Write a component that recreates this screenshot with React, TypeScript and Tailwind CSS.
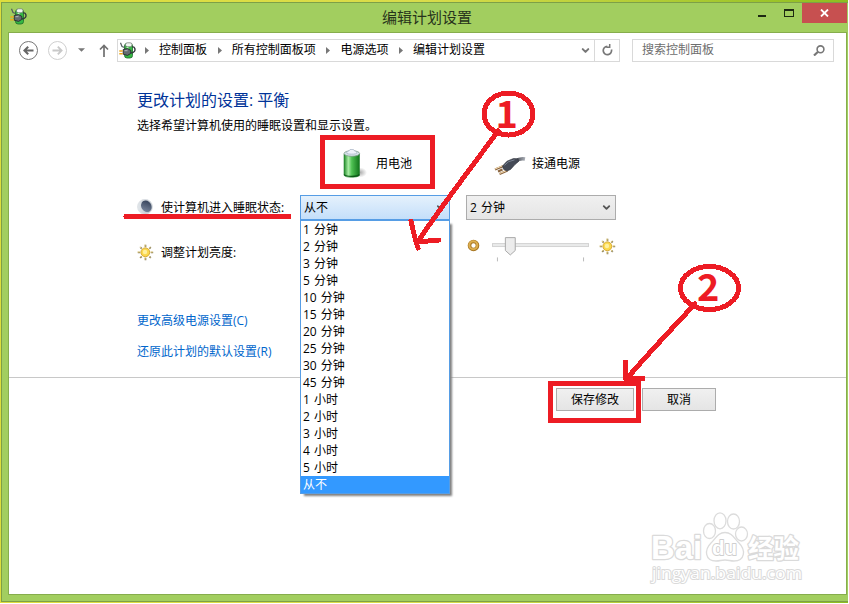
import { ChevronDown } from "lucide-react";

const crumbs = ["控制面板", "所有控制面板项", "电源选项", "编辑计划设置"];

const durations = [
  "1 分钟", "2 分钟", "3 分钟", "5 分钟", "10 分钟", "15 分钟", "20 分钟", "25 分钟",
  "30 分钟", "45 分钟", "1 小时", "2 小时", "3 小时", "4 小时", "5 小时", "从不",
];

function PowerIcon() {
  return (
    <svg width="17" height="17" viewBox="0 0 17 17" className="shrink-0">
      <rect x="5.5" y="1.500" width="8" height="14.500" rx="2.500" fill="#35b843" stroke="#1d6b29" strokeWidth="0.8" />
      <rect x="6.500" y="0.800" width="6.500" height="4" rx="1.800" fill="#f1f6f2" stroke="#68736b" strokeWidth="0.7" />
      <path d="M8.500 5v3" stroke="#b4f3b6" strokeWidth="2" />
      <path d="M1.500.8 3 4.500l2.500 1" fill="none" stroke="#555c60" strokeWidth="1.2" />
      <path d="M12 11c3.500-.3 4.400-2.500 3.800-4.500-.4-1.300-1.400-1.800-2.600-1.500" fill="none" stroke="#33383b" strokeWidth="1.4" />
      <path d="M4.200 7.500 8.500 6.500l3.400 2-.2 3-3.200 1.900-4.300-1.200z" fill="#646b6f" stroke="#25292b" strokeWidth="0.9" />
      <path d="M5.500 8.700h3" stroke="#b5bcc0" />
      <path d="M.3 9h3.400M.3 11.700h3.400" stroke="#eda91c" strokeWidth="1.4" />
    </svg>
  );
}

function BatteryIcon() {
  return (
    <svg width="26" height="32" viewBox="0 0 26 32" className="shrink-0">
      <defs>
        <linearGradient id="cell">
          <stop offset="0" stopColor="#1f8a28" />
          <stop offset="0.28" stopColor="#a9eda5" />
          <stop offset="0.5" stopColor="#4fc153" />
          <stop offset="1" stopColor="#11741b" />
        </linearGradient>
        <radialGradient id="cellShade">
          <stop offset="0" stopColor="#888" stopOpacity="0.7" />
          <stop offset="1" stopColor="#888" stopOpacity="0" />
        </radialGradient>
      </defs>
      <ellipse cx="18" cy="24.500" rx="7" ry="5" fill="url(#cellShade)" />
      <path d="M2 6v21c0 3 15.500 3 15.500 0V6z" fill="url(#cell)" stroke="#278532" strokeWidth="0.6" />
      <path d="M2.200 26.500c2 2.500 13 2.500 15.100 0" fill="none" stroke="#0d5a18" strokeWidth="1.2" />
      <ellipse cx="9.800" cy="5.500" rx="7.800" ry="2.800" fill="#d6e2e8" stroke="#7d9a8a" strokeWidth="0.8" />
      <path d="M4.500 5c0-2 3-1.500 3.500-3.500h3.500c.5 2 3.500 1.500 3.500 3.500 0 1.500-10.500 1.500-10.500 0z" fill="#eef2fa" stroke="#a6b3c4" strokeWidth="0.7" />
    </svg>
  );
}

function PlugIcon() {
  return (
    <svg width="32" height="20" viewBox="0 0 32 20" className="shrink-0">
      <defs>
        <linearGradient id="cord">
          <stop offset="0" stopColor="#40454e" />
          <stop offset="1" stopColor="#a9adb5" />
        </linearGradient>
      </defs>
      <path d="M31 3c-4-.8-6.500 0-9.500 2.300" fill="none" stroke="url(#cord)" strokeWidth="3.4" />
      <path d="m1 13.500 8.500-3.500M5.500 18l8-3.500M4 15.500l4.500-2" stroke="#8a6540" strokeWidth="2.2" />
      <path d="m1 13 8-3.400M5.500 17.500l8-3.300" stroke="#f8dfb4" strokeWidth="1" />
      <path d="m8.500 10 4.500-4.800 6.500-2.700 4.500.3.500 2.700-3.500 3-4.500 5-3.500 1.500-3.500-1.800z" fill="#454b57" stroke="#2b2f37" strokeWidth="0.6" />
      <path d="m10.500 9.300 4-3.600 6-1.800" fill="none" stroke="#7a8392" strokeWidth="1" />
    </svg>
  );
}

function MoonIcon() {
  return (
    <svg width="17" height="17" viewBox="0 0 17 17" className="shrink-0">
      <defs>
        <linearGradient id="moon" x1="0" x2="1">
          <stop offset="0" stopColor="#e3e8ec" />
          <stop offset="1" stopColor="#b5bcc4" />
        </linearGradient>
        <linearGradient id="night" x1="1" y1="0" x2="0" y2="1">
          <stop offset="0" stopColor="#2b3850" />
          <stop offset="1" stopColor="#8592a8" />
        </linearGradient>
      </defs>
      <circle cx="8" cy="7.800" r="7.500" fill="url(#moon)" stroke="#dadee2" strokeWidth="0.7" />
      <ellipse cx="9.300" cy="7.300" rx="5" ry="6" fill="url(#night)" transform="rotate(-30 9.300 7.300)" />
    </svg>
  );
}

function SunIcon() {
  return (
    <svg width="17" height="17" viewBox="0 0 17 17" className="shrink-0">
      <g fill="none" strokeWidth="1.7">
        <path
          d="M8.500.8v2.400M8.500 13.800v2.400M.8 8.500h2.400M13.800 8.500h2.400M3.200 3.200l1.500 1.500M12.300 12.300l1.500 1.500M3.200 13.800l1.500-1.500M12.300 4.700l1.500-1.500"
          stroke="#8f8561"
        />
        <path
          d="M8 .5v2.200M8 13.500v2.200M.5 8h2.200M13.500 8h2.200M2.900 2.900l1.300 1.300M12 12l1.300 1.300M2.900 13.300l1.300-1.300M12 4.200l1.300-1.300"
          stroke="#f0d67c"
          strokeWidth="0.9"
        />
      </g>
      <circle cx="8.300" cy="8.300" r="4.400" fill="#fbd94e" stroke="#d7a62c" strokeWidth="0.9" />
      <circle cx="8" cy="8" r="2.200" fill="#fff0a0" />
    </svg>
  );
}

function DimIcon() {
  return (
    <svg width="13" height="13" viewBox="0 0 13 13" className="shrink-0">
      <circle cx="6.500" cy="6.500" r="4" fill="#fff" stroke="#a87724" strokeWidth="3.600" />
      <circle cx="6.300" cy="6.300" r="4" fill="none" stroke="#dcae50" strokeWidth="2" />
    </svg>
  );
}

function TitleBar() {
  return (
    <header className="flex h-[29px] shrink-0 items-start">
      <div className="flex w-[100px] pt-[5px] pl-[8px]">
        <PowerIcon />
      </div>
      <h1 className="flex-1 pt-[4px] pl-[4px] text-center text-[15px] leading-5 text-[#27331b]">编辑计划设置</h1>
      <div className="flex w-[100px] items-start justify-end">
        <span className="mt-[12px] mr-[18px] h-[2px] w-2 bg-[#1d2912]" />
        <span className="mt-[6px] mr-[8px] h-[8px] w-[10px] border border-t-2 border-[#1d2912]" />
        <button className="mr-px flex h-5 w-[45px] items-center justify-center bg-[#c75050]">
          <svg width="9" height="8" viewBox="0 0 9 8">
            <path d="m1 .5 7 7M8 .5l-7 7" stroke="#fff" strokeWidth="1.8" />
          </svg>
        </button>
      </div>
    </header>
  );
}

function NavBar() {
  return (
    <nav className="flex h-[34px] shrink-0 items-center">
      <span className="ml-[10px] flex size-[19px] items-center justify-center rounded-full border-[1.5px] border-[#777] text-[#666]">
        <svg width="11" height="9" viewBox="0 0 11 9" fill="none" stroke="currentColor" strokeWidth="2">
          <path d="M10.500 4.500h-9M5.200.7 1.400 4.500l3.800 3.800" />
        </svg>
      </span>
      <span className="ml-[10px] flex size-[19px] items-center justify-center rounded-full border border-[#cfcfcf] text-[#c8c8c8]">
        <svg width="11" height="9" viewBox="0 0 11 9" fill="none" stroke="currentColor" strokeWidth="1.8">
          <path d="M.5 4.500h9M5.800.7l3.800 3.800-3.800 3.800" />
        </svg>
      </span>
      <svg width="7" height="4" viewBox="0 0 8 4" className="ml-[11px]">
        <path d="M0 0h8L4 4z" fill="#777" />
      </svg>
      <svg width="10" height="13" viewBox="0 0 10 13" className="ml-[14px]" fill="none" stroke="#707070" strokeWidth="1.7">
        <path d="M5 13V1.500M1 5.500l4-4 4 4" />
      </svg>
      <div className="ml-[8px] flex h-[23px] w-[503px] items-center border border-[#d9d9d9]">
        <div className="ml-[1px] flex w-[18px]">
          <PowerIcon />
        </div>
        {crumbs.map((crumb) => (
          <div key={crumb} className="flex items-center">
            <svg width="4" height="7" viewBox="0 0 4 7" className="mr-[10px] ml-[8px]">
              <path d="M0 0l4 3.500L0 7z" fill="#777" />
            </svg>
            <span className="mr-[2.700px]">{crumb}</span>
          </div>
        ))}
        <div className="ml-auto flex h-full items-center">
          <ChevronDown size={11} strokeWidth={4.500} className="mr-[3px] text-[#777]" />
          <span className="flex h-full w-[25px] items-center justify-center border-l border-[#d9d9d9]">
            <svg width="11" height="12" viewBox="0 0 11 12" fill="none" stroke="#777" strokeWidth="1.7">
              <path d="M9.500 5.500a4.200 4.200 0 1 1-4.200-3.200" />
              <path d="M3.800 0v3.200h3.400" strokeWidth="1.5" transform="translate(11.500 0) scale(-1 1)" />
            </svg>
          </span>
        </div>
      </div>
      <div className="ml-[12px] flex h-[23px] w-[202px] items-center justify-between border border-[#d9d9d9] pr-2 pl-[9px] text-[#6d6d6d]">
        <span>搜索控制面板</span>
        <svg width="12" height="11" viewBox="0 0 12 11" fill="none" stroke="#777">
          <circle cx="7.500" cy="4.300" r="3.400" strokeWidth="1.600" />
          <path d="M5 6.700 1 10.500" strokeWidth="2.200" />
        </svg>
      </div>
    </nav>
  );
}

function SleepSelect() {
  return (
    <div className="relative flex h-[25px] w-[150px] items-center justify-between border border-[#569de5] bg-linear-to-b from-[#e5f1fc] to-[#c4dffa] pr-[3px] pl-[3px]">
      <span>从不</span>
      <ChevronDown size={11} strokeWidth={3.500} className="text-[#555]" />
      <ul className="absolute top-[24px] -left-px z-10 w-[150px] border border-[#569de5] bg-white shadow-[3px_3px_2px_-1px_#808080]">
        {durations.map((item, i) => (
          <li
            key={item}
            className={
              i === durations.length - 1
                ? "h-[17px] bg-[#3399ff] pl-[2px] leading-[17px] text-white"
                : "h-[17px] pl-[2px] leading-[17px] [word-spacing:1px]"
            }
          >
            {item}
          </li>
        ))}
      </ul>
    </div>
  );
}

function BrightnessSlider() {
  return (
    <div className="flex w-[150px] items-start">
      <div className="mt-[3px] ml-[1px]">
        <DimIcon />
      </div>
      <svg width="98" height="25" viewBox="0 0 98 25" className="mt-[1px] ml-[12px]">
        <rect x="0.500" y="6.500" width="97" height="3" fill="#e9eaea" stroke="#d3d3d3" />
        <path d="M13.500.5h10v13l-5 4.500-5-4.500z" fill="#ececec" stroke="#a9a9a9" />
        <path d="M5.500 20.500v4M92.500 20.500v4" stroke="#b9b9b9" />
      </svg>
      <div className="mt-[2px] ml-[10px]">
        <SunIcon />
      </div>
    </div>
  );
}

function Watermark() {
  return (
    <svg width="160" height="78" viewBox="0 0 160 78" className="absolute right-[39px] bottom-[4px]">
      <g fill="#fff" stroke="#dcdcdc" strokeWidth="1.3">
        <ellipse cx="62.500" cy="19" rx="6" ry="7.500" />
        <ellipse cx="73" cy="8.800" rx="6" ry="8" />
        <ellipse cx="86.500" cy="9.500" rx="6" ry="7.500" />
        <ellipse cx="94.500" cy="22" rx="6" ry="7" />
        <path d="M78 20.500c7 0 9 5.500 14 10.500 7 7 6 18-5 18-4 0-5-1-9-1s-5 1-9 1c-11 0-12-11-5-18 5-5 7-10.500 14-10.500z" />
      </g>
      <g
        fontFamily='"Liberation Sans", "Noto Sans CJK SC", sans-serif'
        fontWeight="bold"
        strokeLinejoin="round"
        fill="#fff"
        stroke="#dadada"
        strokeWidth="2.600"
        paintOrder="stroke"
      >
        <text x="4" y="47" fontSize="34" textLength="51" lengthAdjust="spacingAndGlyphs">Bai</text>
        <text x="65" y="43" fontSize="20" strokeWidth="1.800" stroke="#cfcfcf" textLength="25" lengthAdjust="spacingAndGlyphs">du</text>
        <text x="101" y="46" fontSize="26" textLength="51" lengthAdjust="spacingAndGlyphs">经验</text>
      </g>
      <text
        x="5"
        y="67"
        fontSize="17"
        fontFamily='"Open Sans", sans-serif'
        fill="#fff"
        stroke="#dadada"
        strokeWidth="2"
        paintOrder="stroke"
        textLength="150"
        lengthAdjust="spacingAndGlyphs"
      >
        jingyan.baidu.com
      </text>
    </svg>
  );
}

// Hand-drawn red marks that sit on top of the whole window
function Markup() {
  return (
    <svg
      width="849"
      height="604"
      viewBox="0 0 849 604"
      className="pointer-events-none absolute inset-0 z-20"
      fill="none"
      stroke="#ed1c24"
      strokeWidth="5"
      strokeLinecap="round"
      shapeRendering="crispEdges"
    >
      <rect x="322.500" y="137.500" width="110" height="49" strokeLinecap="butt" />
      <path d="M126 216.500h163" />
      <ellipse cx="508.500" cy="114" rx="24.500" ry="21" />
      <path d="M498 131C477 160 437 212 419 240M411 221c2 9 4 19 7 27M418 242c7-1 13-1 21-2" />
      <rect x="550.500" y="383.500" width="88" height="37" strokeLinecap="butt" />
      <ellipse cx="709.500" cy="288" rx="29" ry="21.500" />
      <path d="M695 304c-18 19-45 48-66 72M625.500 362v16M626 378.500h17" />
      <g fill="#ed1c24" stroke="none" fontFamily='"Noto Sans CJK SC", sans-serif' fontWeight="bold" fontSize="38">
        <text x="495.500" y="128">1</text>
        <text x="697" y="301">2</text>
      </g>
    </svg>
  );
}

export default function App() {
  return (
    <div className="relative h-[604px] w-[849px] overflow-hidden bg-white font-['Open_Sans','Noto_Sans_CJK_SC',sans-serif] text-xs text-black">
      <div className="h-[603px] w-[848px] bg-linear-to-r from-[#dede3c] via-[#d9dc4a] to-[#8ebf20] pt-[2px] pl-px">
        <div className="flex h-[600px] w-[847px] flex-col border border-r-0 border-[#7da047] bg-[#a2ce5f]">
          <TitleBar />
          <div className="relative mr-px ml-[6px] flex h-[563px] flex-col border border-[#86ad4c] bg-white">
            <NavBar />
            <main className="flex flex-col">
              <h2 className="mt-[23px] ml-[128px] h-5 text-base leading-5 text-[#003399]">更改计划的设置: 平衡</h2>
              <p className="mt-[6px] ml-[128px] h-5 leading-5">选择希望计算机使用的睡眠设置和显示设置。</p>

              <div className="mt-[2px] ml-[333px] flex h-[52px] items-center">
                <BatteryIcon />
                <span className="ml-[8px] w-[108px]">用电池</span>
                <div className="mt-[3px] ml-[10px]">
                  <PlugIcon />
                </div>
                <span className="ml-[6px]">接通电源</span>
              </div>

              <div className="mt-[5px] ml-[128px] flex h-[25px] items-center">
                <div className="flex w-[163px] items-center gap-[7px]">
                  <MoonIcon />
                  <span>使计算机进入睡眠状态:</span>
                </div>
                <SleepSelect />
                <div className="ml-4 flex h-[25px] w-[150px] items-center justify-between border border-[#acacac] bg-linear-to-b from-[#f0f0f0] to-[#e5e5e5] pr-[3px] pl-[3px]">
                  <span className="[word-spacing:1px]">2 分钟</span>
                  <ChevronDown size={11} strokeWidth={4} className="text-[#555]" />
                </div>
              </div>

              <div className="mt-[16px] ml-[128px] flex h-8 items-start">
                <div className="flex h-[33px] w-[163px] items-center gap-[7px]">
                  <SunIcon />
                  <span>调整计划亮度:</span>
                </div>
                <div className="ml-[166px]">
                  <BrightnessSlider />
                </div>
              </div>

              <a className="mt-[43px] ml-[128px] h-5 leading-5 text-[#0066cc]">更改高级电源设置(C)</a>
              <a className="mt-[11px] ml-[128px] h-5 leading-5 text-[#0066cc]">还原此计划的默认设置(R)</a>

              <div className="mt-[15px] flex gap-2 border-t border-[#c8c8c8] pt-[10px] pl-[547px]">
                <button className="h-[23px] w-[78px] border border-[#acacac] bg-linear-to-b from-[#f0f0f0] to-[#e5e5e5]">
                  保存修改
                </button>
                <button className="h-[23px] w-[74px] border border-[#acacac] bg-linear-to-b from-[#f0f0f0] to-[#e5e5e5]">
                  取消
                </button>
              </div>
            </main>
            <Watermark />
          </div>
        </div>
      </div>
      <Markup />
    </div>
  );
}
